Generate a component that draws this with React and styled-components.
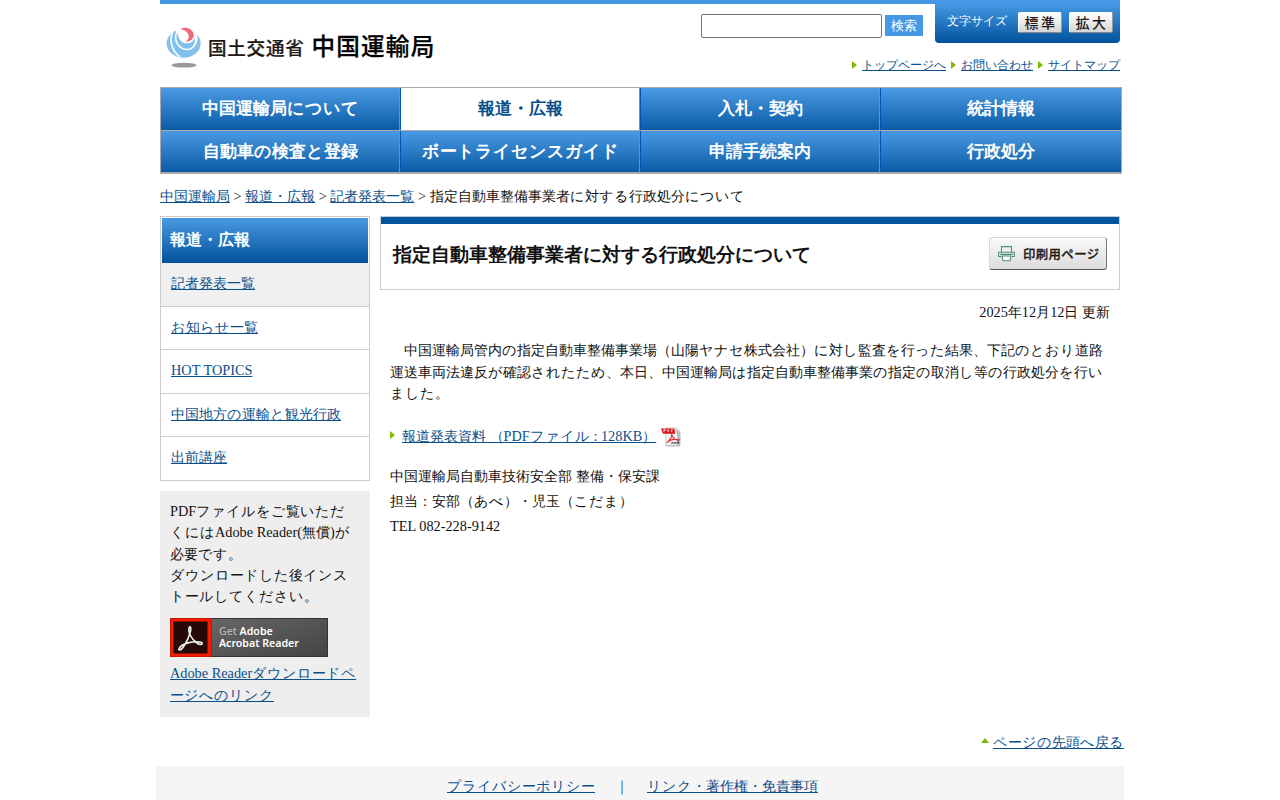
import React from 'react';
import styled, { createGlobalStyle } from 'styled-components';

const Global = createGlobalStyle`
  * { box-sizing: border-box; }
  html, body { margin: 0; background: #fff; }
  body { font-family: "Liberation Serif", serif; font-size: 14.3px; color: #111; overflow: hidden; }
  a { color: #0b4f8a; text-decoration: underline; }
  ul, p, h1, h2 { margin: 0; padding: 0; list-style: none; }
`;

const Kana = styled.span`
  letter-spacing: 1px;
`;
/* Kana are set one pixel looser than kanji and Latin text. */
const T = ({ children }) =>
  children.split(/([ぁ-んァ-ヶ]+)/).map((s, i) => (i % 2 ? <Kana key={i}>{s}</Kana> : s));

const Page = styled.div`
  width: 968px;
  height: 800px;
  margin: 0 auto;
  padding: 0 4px;
  overflow: hidden;
`;
const Header = styled.header`
  width: 960px;
  height: 87px;
  border-top: 4px solid #4599e4;
  display: flex;
  justify-content: space-between;
`;
const Logo = styled.div`
  display: flex;
  align-items: flex-start;
  padding: 22px 0 0 5px;
`;
const LogoText = styled.span`
  font-family: "Noto Sans CJK JP", sans-serif;
  font-weight: 500;
  white-space: nowrap;
  line-height: 30px;
  color: ${p => (p.$main ? '#000' : '#231815')};
  -webkit-text-stroke: ${p => (p.$main ? '0.25px' : '0.2px')} currentColor;
  font-size: ${p => (p.$main ? '23.6px' : '18.6px')};
  letter-spacing: ${p => (p.$main ? '1.2px' : '0.7px')};
  margin: ${p => (p.$main ? '4px 0 0 7px' : '6px 0 0 5px')};
`;
const HeaderRight = styled.div`
  display: flex;
  flex-direction: column;
  align-items: flex-end;
`;
const Tools = styled.div`
  display: flex;
  align-items: flex-start;
  height: 39px;
`;
const Search = styled.form`
  display: flex;
  align-items: flex-start;
  gap: 3px;
  margin: 10px 12px 0 0;
`;
const SearchInput = styled.input`
  width: 181px;
  height: 24px;
  border: 1px solid #767676;
  border-radius: 2px;
  padding: 0;
  background: #fff;
`;
const SearchButton = styled.button`
  width: 38px;
  height: 21px;
  margin-top: 1px;
  border: 0;
  padding: 0;
  background: #4599e4;
  color: #fff;
  font: 13.33px "Liberation Sans", sans-serif;
`;
const SizePanel = styled.div`
  width: 185px;
  height: 39px;
  padding: 8px 7px 0 12px;
  display: flex;
  align-items: flex-start;
  gap: 7px;
  border-radius: 0 0 4px 4px;
  background: linear-gradient(#4599e4, #00529a);
  color: #fff;
  font-size: 12px;
  line-height: 18px;
`;
const SizeLabel = styled.span`
  width: 64px;
  flex: none;
  white-space: nowrap;
`;
const SizeButton = styled.span`
  width: 44px;
  height: 21px;
  flex: none;
  border-radius: 2px;
  border: 1px solid #f8f8f8;
  border-right-color: #999;
  border-bottom-color: #888;
  background: linear-gradient(#fff, #d5d5d5);
  color: #231815;
  text-align: center;
  font: 500 14px/18px "Noto Sans CJK JP", sans-serif;
  letter-spacing: 2.5px;
  padding-left: 2px;
`;
const QuickLinks = styled.div`
  display: flex;
  gap: 5px;
  margin-top: 13px;
  font-size: 12px;
  line-height: 18px;
  white-space: nowrap;
`;
const MarkedLink = styled.span`
  display: flex;
  align-items: flex-start;
`;
const Marker = styled.span`
  flex: none;
  width: 0;
  height: 0;
  margin: ${p => p.$top || '5px'} ${p => p.$gap || '5px'} 0 0;
  border: 4px solid transparent;
  ${p => p.$up
    ? 'border-top: 0; border-bottom: 5px solid #7fb800;'
    : 'border-right: 0; border-left: 5px solid #7fb800;'}
`;
const Nav = styled.nav`
  width: 962px;
  height: 87px;
  display: grid;
  grid-template-columns: 239px 240px 240px 241px;
  grid-template-rows: 42px 41px;
  row-gap: 1px;
  border: 1px solid #aaa;
  border-bottom-width: 2px;
  background: #aaa;
`;
const NavItem = styled.a`
  && {
    color: ${p => (p.$on ? '#0b4f8a' : '#fff')};
    text-decoration: none;
  }
  background: ${p => (p.$on ? '#fff' : 'linear-gradient(#4a9ae3, #0a5ba5)')};
  border-left: ${p => (p.$first ? '0' : '1px solid #0055b3')};
  border-right: ${p => (p.$last ? '0' : '1px solid #4a9ae3')};
  text-align: center;
  font-weight: bold;
  font-size: 17.2px;
  line-height: 41px;
  white-space: nowrap;
`;
const Crumbs = styled.div`
  height: 42px;
  padding-top: 12px;
  line-height: 21px;
  white-space: nowrap;
`;
const Columns = styled.div`
  display: flex;
  gap: 10px;
  height: 501px;
`;
const Side = styled.aside`
  width: 210px;
  flex: none;
`;
const SideMenu = styled.div`
  border: 1px solid #ccc;
  height: 265px;
`;
const SideTitle = styled.h2`
  margin: 1px 1px 0;
  height: 45px;
  padding-left: 8px;
  font-size: 16px;
  line-height: 43px;
  color: #fff;
  background: linear-gradient(#4a9ae3, #00529a);
`;
const SideItem = styled.li`
  height: ${p => (p.$last ? '42px' : '43.5px')};
  padding: 10px 0 0 10px;
  line-height: 21px;
  border-bottom: ${p => (p.$last ? '0' : '1px solid #ccc')};
  background: ${p => (p.$on ? '#f0f0f0' : '#fff')};
`;
const Reader = styled.div`
  height: 226px;
  margin-top: 10px;
  padding: 10px 10px 0;
  background: #eee;
  line-height: 21.3px;
`;
const ReaderLine = styled.p`
  height: 21.25px;
  white-space: nowrap;
`;
const ReaderLink = styled.a`
  display: block;
  height: 22px;
  white-space: nowrap;
`;
const ReaderBadge = styled.div`
  width: 158px;
  height: 39px;
  margin: 10.75px 0 6px;
  display: flex;
  border: 1px solid #333;
  border-left: 0;
  background: linear-gradient(160deg, #6d6d6d, #444);
  color: #fff;
  svg { margin: -1px 0; flex: none; }
`;
const BadgeText = styled.div`
  padding: 6px 0 0 7px;
  white-space: nowrap;
  font: 600 10.6px/12px "Noto Sans", "Open Sans", sans-serif;
  b { color: #b5b5b5; font-weight: 500; }
`;
const Main = styled.main`
  width: 740px;
`;
const TitleBox = styled.div`
  height: 74px;
  border: 1px solid #ccc;
  padding: 0 12px;
  display: flex;
  justify-content: space-between;
  background: linear-gradient(#00579f 7px, #fff 7px);
`;
const Title = styled.h1`
  padding-top: 26px;
  font-size: 18.72px;
  line-height: 24px;
  white-space: nowrap;
`;
const PrintButton = styled.div`
  width: 118px;
  height: 33px;
  margin-top: 20px;
  display: flex;
  padding: 8px 0 0 8px;
  border: 1px solid #d8d8d8;
  border-right-color: #777;
  border-bottom-color: #555;
  border-radius: 3px;
  background: linear-gradient(#fafafa, #dcdcdc);
  color: #231815;
  font: 500 12.4px/16px "Noto Sans CJK JP", sans-serif;
  -webkit-text-stroke: 0.3px currentColor;
  letter-spacing: 0.4px;
  white-space: nowrap;
  svg { margin-right: 8px; flex: none; }
`;
const Body = styled.div`
  padding: 12px 10px 0;
  line-height: 21.6px;
`;
const Updated = styled.p`
  text-align: right;
`;
const Lead = styled.p`
  margin-top: 16.4px;
  white-space: pre;
`;
const FileRow = styled.div`
  display: flex;
  margin-top: 21px;
  white-space: nowrap;
  svg { margin: 1px 0 0 5px; }
`;
const Contact = styled.div`
  margin-top: 16.6px;
  line-height: 25px;
`;
const BackTop = styled.div`
  display: flex;
  justify-content: flex-end;
  width: 964px;
  height: 49px;
  padding-top: 14px;
  line-height: 22px;
`;
const Footer = styled.footer`
  width: 968px;
  height: 40px;
  margin-left: -4px;
  padding: 9px 0 0 291px;
  display: flex;
  background: #f5f5f5;
  line-height: 22px;
  white-space: nowrap;
`;
const Divider = styled.span`
  width: 52px;
  padding-left: 20px;
  color: #0b4f8a;
`;

const nav = ['中国運輸局について', '報道・広報', '入札・契約', '統計情報', '自動車の検査と登録', 'ボートライセンスガイド', '申請手続案内', '行政処分'];
const side = ['記者発表一覧', 'お知らせ一覧', 'HOT TOPICS', '中国地方の運輸と観光行政', '出前講座'];
const readerLines = [
  'PDFファイルをご覧いただ',
  'くにはAdobe Reader(無償)が',
  '必要です。',
  'ダウンロードした後インス',
  'トールしてください。',
];

const MlitMark = () => (
  <svg width="38" height="44" viewBox="0 0 38 44">
    <ellipse cx="19" cy="39.2" rx="12.5" ry="2.4" fill="#999" />
    <ellipse cx="18.6" cy="17.4" rx="17" ry="14.4" fill="#82c1ec" />
    <path d="M9 1H28C32 5 31 12 27 16C22 19 15 17 13.5 11C12.6 7 10 5 9 1Z" fill="#fff" />
    <path d="M9.5 2C3 13 6 24 15 31M27 2C33 8 33 15 29 20" fill="none" stroke="#fff" strokeWidth="1.5" />
    <path d="M12.5 4C8 13 12 22 21 23.5C29 24 33 16 29.5 7" fill="none" stroke="#fff" strokeWidth="1.5" />
    <path d="M13.5 5.5C11.5 13 17 18.6 23.5 17.5C17 21.5 8.5 15 13.5 5.5Z" fill="#82c1ec" />
    <path d="M15.5 3C20 .5 27 2 28.7 8C29.5 12.5 25.5 16 20.5 15.6C26 13 25 5 15.5 3Z" fill="#ed6b76" />
  </svg>
);
const Printer = () => (
  <svg width="17" height="16" viewBox="0 0 17 16" fill="none" stroke="#4f8f80" strokeWidth="1.1">
    <path d="M3.5 6V.6h10V6M3.5 10.5H.6V6.2H16.4v4.3H13.5M2 8.4H15" />
    <path d="M4 10H13L12 14.8H5Z" fill="#fff" />
  </svg>
);
const PdfIcon = () => (
  <svg width="20" height="20" viewBox="0 0 21 20">
    <path d="M5 .5H16L20 4V19.5H5Z" fill="#f2f2f2" stroke="#ccc" />
    <path d="M15 1L20 5V19.5H6V18.5H17V8Z" fill="#bbb" />
    <path d="M0 1H14L15 6.5H2Z" fill="#d71920" />
    <path d="M3 4.7V2.3h1.5v1H3M7 4.5V2.3q2 0 1 2.2M11 4.7V2.3h1.6M11 3.5h1" fill="none" stroke="#fff" strokeWidth=".7" />
    <path d="M6 16C10 13 12 9 11 7C13 12 16 14 19 13C14 12 9 13 6 16" fill="none" stroke="#e32a2f" strokeWidth="1.2" />
    <path d="M11 17.2l1-2 1 2m1 0v-2m1.5 2v-2m1.5 2v-2h1.5v2" fill="none" stroke="#333" strokeWidth=".9" />
  </svg>
);
const AcrobatIcon = () => (
  <svg width="42" height="39" viewBox="0 0 42 39">
    <rect width="42" height="39" fill="#c81400" />
    <rect x="1" y="1" width="40" height="37" fill="#f01c06" />
    <rect x="3.5" y="3.5" width="34" height="32" fill="#260806" />
    <path d="M9 31C11 25 24 23 30 24C35 25 31 28 27 25C21 21 18 14 19 10C20 7 22 10 20 15C18 22 13 31 10 32Q8 32 9 31Z" fill="none" stroke="#eee" strokeWidth="1.6" />
  </svg>
);

export default function App() {
  return (
    <Page lang="ja">
      <Global />
      <Header>
        <Logo>
          <MlitMark />
          <LogoText>国土交通省</LogoText>
          <LogoText $main>中国運輸局</LogoText>
        </Logo>
        <HeaderRight>
          <Tools>
            <Search>
              <SearchInput />
              <SearchButton type="button">検索</SearchButton>
            </Search>
            <SizePanel>
              <SizeLabel>文字サイズ</SizeLabel>
              <SizeButton>標準</SizeButton>
              <SizeButton>拡大</SizeButton>
            </SizePanel>
          </Tools>
          <QuickLinks>
            {['トップページへ', 'お問い合わせ', 'サイトマップ'].map(t => (
              <MarkedLink key={t}><Marker /><a href="#">{t}</a></MarkedLink>
            ))}
          </QuickLinks>
        </HeaderRight>
      </Header>
      <Nav>
        {nav.map((t, i) => (
          <NavItem key={t} href="#" $on={i === 1} $first={i % 4 === 0} $last={i % 4 === 3}><T>{t}</T></NavItem>
        ))}
      </Nav>
      <Crumbs>
        <a href="#">中国運輸局</a> &gt; <a href="#">報道・広報</a> &gt; <a href="#">記者発表一覧</a> &gt; <T>指定自動車整備事業者に対する行政処分について</T>
      </Crumbs>
      <Columns>
        <Side>
          <SideMenu>
            <SideTitle>報道・広報</SideTitle>
            <ul>
              {side.map((t, i) => (
                <SideItem key={t} $on={i === 0} $last={i === 4}><a href="#"><T>{t}</T></a></SideItem>
              ))}
            </ul>
          </SideMenu>
          <Reader>
            {readerLines.map(t => <ReaderLine key={t}><T>{t}</T></ReaderLine>)}
            <ReaderBadge>
              <AcrobatIcon />
              <BadgeText><b>Get</b> Adobe<br />Acrobat Reader</BadgeText>
            </ReaderBadge>
            <ReaderLink href="#"><T>Adobe Readerダウンロードペ</T></ReaderLink>
            <ReaderLink href="#"><T>ージへのリンク</T></ReaderLink>
          </Reader>
        </Side>
        <Main>
          <TitleBox>
            <Title>指定自動車整備事業者に対する行政処分について</Title>
            <PrintButton><Printer />印刷用ページ</PrintButton>
          </TitleBox>
          <Body>
            <Updated>2025年12月12日 更新</Updated>
            <Lead>
              <T>{'\u3000中国運輸局管内の指定自動車整備事業場（山陽ヤナセ株式会社）に対し監査を行った結果、下記のとおり道路'}</T><br />
              <T>運送車両法違反が確認されたため、本日、中国運輸局は指定自動車整備事業の指定の取消し等の行政処分を行い</T><br />
              <T>ました。</T>
            </Lead>
            <FileRow>
              <Marker $gap="7px" />
              <a href="#"><T>報道発表資料 （PDFファイル : 128KB）</T></a>
              <PdfIcon />
            </FileRow>
            <Contact>
              中国運輸局自動車技術安全部 整備・保安課<br />
              <T>担当：安部（あべ）・児玉（こだま）</T><br />
              TEL 082-228-9142
            </Contact>
          </Body>
        </Main>
      </Columns>
      <BackTop>
        <MarkedLink><Marker $up $top="7px" $gap="4px" /><a href="#"><T>ページの先頭へ戻る</T></a></MarkedLink>
      </BackTop>
      <Footer>
        <a href="#"><T>プライバシーポリシー</T></a>
        <Divider>｜</Divider>
        <a href="#"><T>リンク・著作権・免責事項</T></a>
      </Footer>
    </Page>
  );
}
